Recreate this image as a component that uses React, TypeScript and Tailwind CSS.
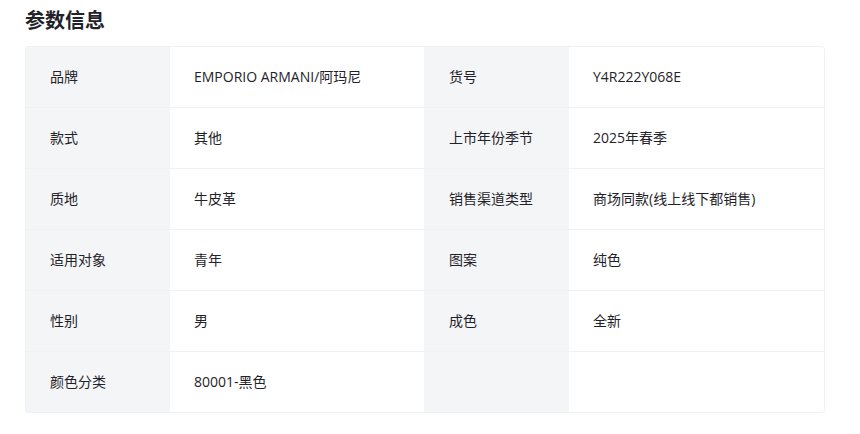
const rows: [string, string, string, string][] = [
  ['品牌', 'EMPORIO ARMANI/阿玛尼', '货号', 'Y4R222Y068E'],
  ['款式', '其他', '上市年份季节', '2025年春季'],
  ['质地', '牛皮革', '销售渠道类型', '商场同款(线上线下都销售)'],
  ['适用对象', '青年', '图案', '纯色'],
  ['性别', '男', '成色', '全新'],
  ['颜色分类', '80001-黑色', '', ''],
];

export default function App() {
  return (
    <div
      className="min-h-[434px] w-[860px] bg-white px-[25px] pt-[6px] text-[#1f2329]"
      style={{ fontFamily: '"Open Sans", "Noto Sans CJK SC", sans-serif' }}
    >
      <h2 className="text-xl font-bold leading-7" style={{ fontFamily: '"Noto Sans CJK SC", sans-serif' }}>参数信息</h2>
      <div className="mt-3 w-[800px] overflow-hidden rounded-[3px] border border-[#f0f1f3]">
        {rows.map((r, i) => (
          <div
            key={i}
            className={`grid grid-cols-[144px_254px_145px_1fr] text-sm ${i > 0 ? 'h-[61px] border-t border-[#f0f1f3]' : 'h-[60px]'}`}
          >
            <div className="flex items-center bg-[#f4f5f7] pl-[24px]">{r[0]}</div>
            <div className="flex items-center pl-[24px]">{r[1]}</div>
            <div className="flex items-center bg-[#f4f5f7] pl-[25px]">{r[2]}</div>
            <div className="flex items-center pl-[24px]">{r[3]}</div>
          </div>
        ))}
      </div>
    </div>
  );
}
